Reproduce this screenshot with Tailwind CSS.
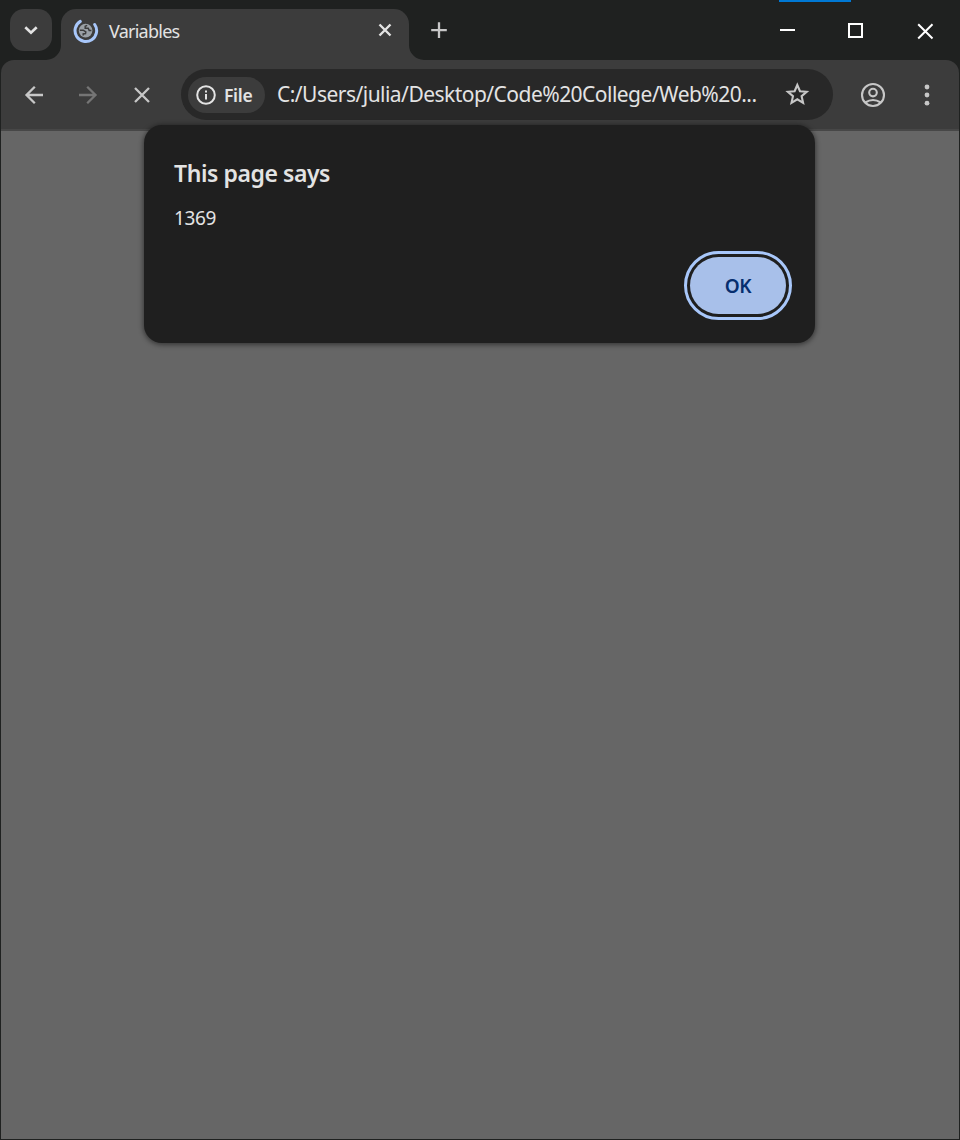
<!DOCTYPE html>
<html lang="en">
<head>
<meta charset="utf-8">
<title>Variables</title>
<script src="https://cdn.jsdelivr.net/npm/@tailwindcss/browser@4"></script>
</head>
<body class="bg-[#1f2120]">
<div class="relative flex h-[1140px] w-[960px] flex-col overflow-hidden bg-[#1f2120] font-['Noto_Sans','Open_Sans',sans-serif] text-[#e3e3e3]">
  <div class="absolute left-[779px] top-0 h-[2px] w-[72px] bg-[#0078d4]"></div>

  <!-- Tab strip -->
  <header class="flex h-[60px] shrink-0 pl-[10px] pt-[9px]">
    <button class="flex h-[42px] w-[42px] items-center justify-center rounded-[14px] bg-[#3c3c3c]">
      <svg class="h-[42px] w-[42px]" viewBox="0 0 42 42" fill="none" stroke="#e3e3e3" stroke-width="2.6"><path d="M15.3 18.2l5.7 5.6 5.7-5.6"/></svg>
    </button>
    <div class="relative ml-[9px] flex h-[51px] w-[348px] rounded-t-[15px] bg-[#3c3c3c] pl-[12px]">
      <svg class="absolute bottom-0 left-[-15px] h-[15px] w-[15px]" viewBox="0 0 15 15"><path fill="#3c3c3c" d="M15 0v15H0A15 15 0 0 0 15 0z"/></svg>
      <svg class="absolute bottom-0 right-[-15px] h-[15px] w-[15px]" viewBox="0 0 15 15"><path fill="#3c3c3c" d="M0 0v15h15A15 15 0 0 1 0 0z"/></svg>
      <svg class="mt-[9px] h-[26px] w-[26px]" viewBox="0 0 26 26" fill="none">
        <path d="M7.3 3.4A10.8 10.8 0 1 0 21.7 6.5" stroke="#a8c7fa" stroke-width="3" stroke-linecap="round"/>
        <circle cx="12.6" cy="12.6" r="6.8" fill="#9aa0a6"/>
        <path d="M6.8 12.2h3.4l2.6 1.6-.3 1.8-2.3.4v1.6M14.2 7.4l-2 .8v2h3l1 2.2h2.2" stroke="#3c3c3c" stroke-width="1.5"/>
      </svg>
      <span class="ml-[10px] mt-[9px] whitespace-nowrap text-[18px] leading-[26px] tracking-[-0.75px]">Variables</span>
      <svg class="absolute left-[316px] top-[13px] h-[16px] w-[16px]" viewBox="0 0 16 16" stroke="#e3e3e3" stroke-width="2.4"><path d="M2.5 2.5l11 11M13.5 2.5l-11 11"/></svg>
    </div>
    <svg class="ml-[21px] mt-[12px] h-[18px] w-[18px]" viewBox="0 0 18 18" stroke="#c7c7c7" stroke-width="2.3"><path d="M9 1.3v15.6M1.2 9.1h15.6"/></svg>
    <svg class="ml-[332px] mt-[11px] h-[22px] w-[160px]" viewBox="0 0 160 22" fill="none" stroke="#fff" stroke-width="2">
      <path d="M0 10h15"/><path d="M69 4h13v13H69z"/><path d="M138.2 4.2l14.3 14.3M152.5 4.2l-14.3 14.3"/>
    </svg>
  </header>

  <!-- Toolbar -->
  <div class="mx-px flex h-[71px] shrink-0 items-start rounded-t-[13px] border-b-2 border-[#474747] bg-[#3c3c3c] pt-[9px]">
    <svg class="h-[52px] w-[180px]" viewBox="1 69 180 52" fill="none" stroke="#c7c7c7" stroke-width="2.3">
      <path d="M43 95H26.5M34.8 86.8L26.5 95l8.3 8.2"/>
      <path stroke="#757575" d="M79 95h16.5M87.2 86.8l8.3 8.2-8.3 8.2"/>
      <path d="M135 88l14 14M149 88l-14 14"/>
    </svg>
    <div class="flex h-[51px] w-[652px] items-center rounded-full bg-[#282828] pl-[7px]">
      <div class="flex h-[36px] w-[77px] items-center rounded-full bg-[#3c3c3c] pl-[7px]">
        <svg class="h-[22px] w-[22px] shrink-0" viewBox="0 0 22 22" fill="none" stroke="#e3e3e3" stroke-width="2"><circle cx="11" cy="11" r="8.8"/><path d="M11 10v5.4M11 6.6v2"/></svg>
        <span class="ml-[7px] text-[17.5px] font-semibold leading-[24px] tracking-[-0.3px]">File</span>
      </div>
      <span class="mb-[2px] ml-[12px] w-[490px] whitespace-nowrap text-[21px] leading-[30px] tracking-[-0.53px]">C:/Users/julia/Desktop/Code%20College/Web%20...</span>
      <svg class="mb-[2px] ml-[17px] h-[26px] w-[26px] shrink-0" viewBox="0 0 26 26" fill="none" stroke="#c7c7c7" stroke-width="2.1"><path d="M13.3 4l2.7 6.2 6.7.6-5.1 4.4 1.5 6.6-5.8-3.5-5.8 3.5L9 15.2l-5.1-4.4 6.7-.6z"/></svg>
    </div>
    <svg class="h-[52px] w-[126px]" viewBox="833 69 126 52" fill="none" stroke="#c7c7c7" stroke-width="2.1">
      <circle cx="873" cy="95" r="11"/><circle cx="873" cy="92.6" r="3.8"/><path d="M865.3 102.5q7.7-5 15.4 0"/>
      <g fill="#c7c7c7" stroke="none"><circle cx="927" cy="87" r="2.4"/><circle cx="927" cy="95" r="2.4"/><circle cx="927" cy="103.2" r="2.4"/></g>
    </svg>
  </div>

  <!-- Dimmed page -->
  <main class="mx-px mb-px grow bg-[#666]"></main>

  <!-- Alert dialog -->
  <section class="absolute left-[144px] top-[125px] flex h-[218px] w-[671px] flex-col rounded-[18px] bg-[#1f1f1f] px-[30px] pt-[32px] shadow-[0_1px_5px_1px_rgba(0,0,0,0.45)]">
    <h1 class="text-[23px] font-semibold leading-[32px] tracking-[-0.43px]">This page says</h1>
    <p class="mt-[15px] text-[19px] leading-[28px] tracking-[-0.4px]">1369</p>
    <button class="mr-[-1px] mt-[25px] flex h-[57px] w-[96px] items-center justify-center self-end rounded-full bg-[#a8c0ea] pt-[2px] text-[19px] font-semibold tracking-[-0.4px] text-[#062e6f] outline-3 outline-offset-3 outline-[#a8c7fa]">OK</button>
  </section>
</div>
</body>
</html>
